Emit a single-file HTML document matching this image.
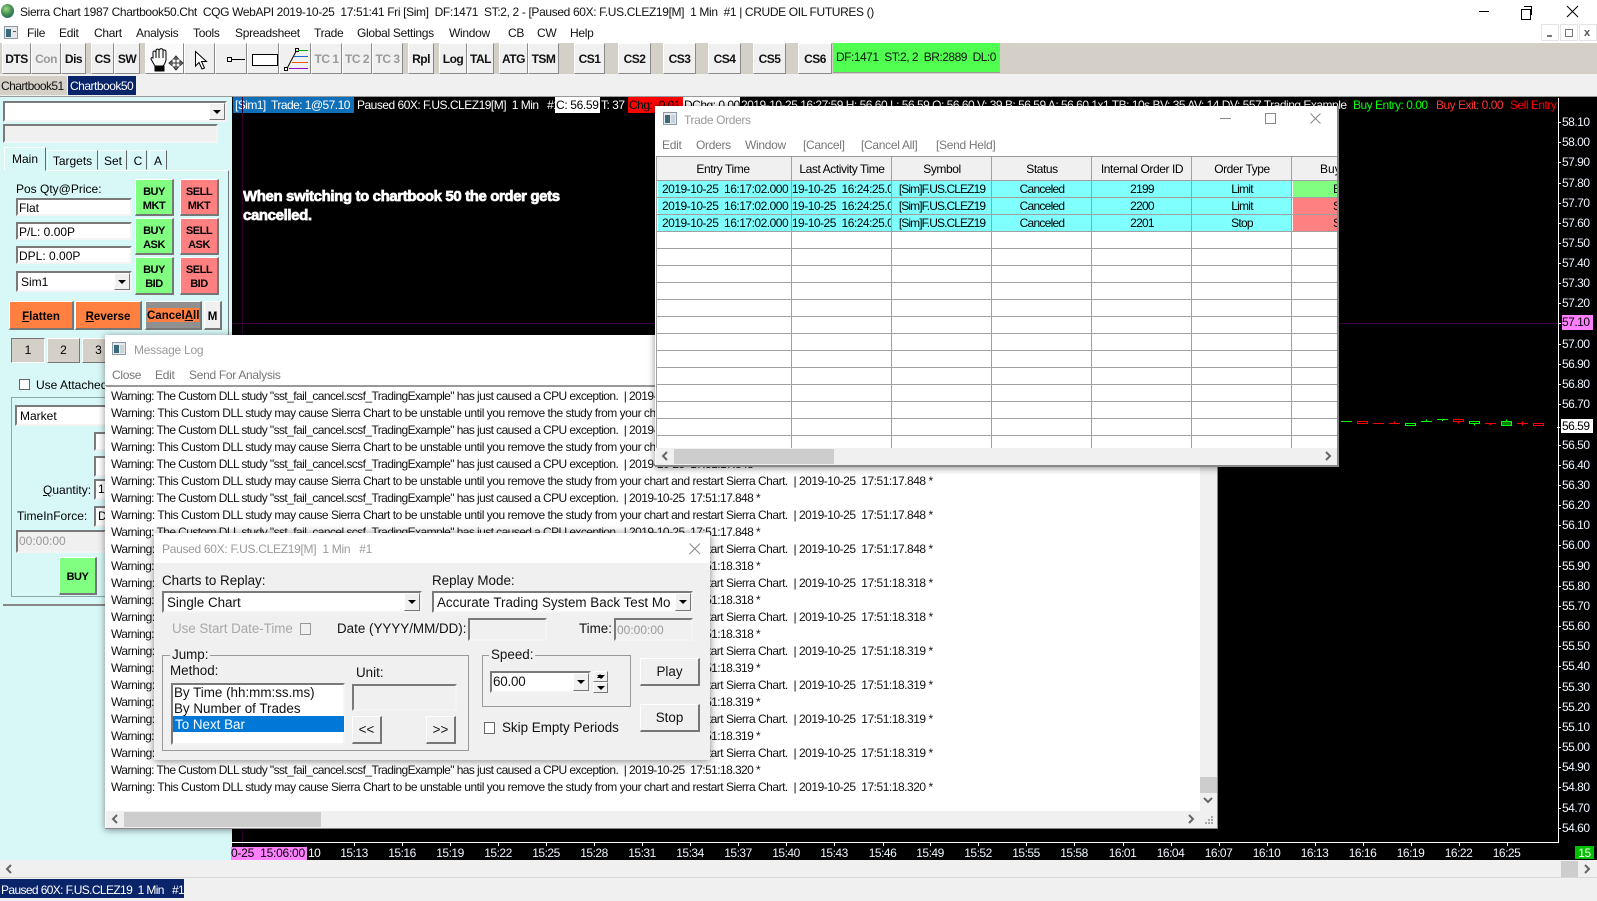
<!DOCTYPE html>
<html><head><meta charset="utf-8"><title>Sierra Chart</title>
<style>
html,body{margin:0;padding:0;width:1597px;height:898px;overflow:hidden;background:#f0f0f0;font:12px "Liberation Sans",sans-serif;color:#000}
div,span.t,svg{position:absolute}
.t{position:absolute;white-space:pre;line-height:16px}
.m{top:25px;letter-spacing:-.3px;color:#111}
.b{box-sizing:border-box;background:#f0f0f0;border:1px solid;border-color:#fff #8a8a8a #8a8a8a #fff;top:43px;height:31px;text-align:center;font-weight:bold;line-height:30px;letter-spacing:-.5px;color:#111}
.g{color:#9a9a9a}
.in{box-sizing:border-box;background:#fff;border:2px solid;border-color:#7a7a7a #f4f4f4 #f4f4f4 #7a7a7a;line-height:16px;white-space:pre;overflow:hidden}
.o{box-sizing:border-box;border:1px solid;border-color:#fff #777 #777 #fff;border-right-width:2px;border-bottom-width:2px;text-align:center;font-weight:bold;font-size:11.5px;line-height:14px;padding-top:8px}
.q{font-size:11px;letter-spacing:-.45px;padding-top:5px}
.bt{box-sizing:border-box;background:#f0f0f0;border:1px solid;border-color:#fff #777 #777 #fff;border-right-width:2px;border-bottom-width:2px;text-align:center;white-space:pre}
.ar{box-sizing:border-box;background:#f0f0f0;border:1px solid;border-color:#fff #777 #777 #fff}
.ar:after{content:"";position:absolute;left:50%;top:50%;margin:-2px 0 0 -4px;border:4px solid transparent;border-top:4px solid #000;border-bottom:0}
.p{position:absolute;left:1562px;height:16px;line-height:16px;color:#eef6ff;letter-spacing:-.5px;white-space:pre}
.p:before{content:"";position:absolute;left:-4px;top:8px;width:3px;height:1px;background:#fff}
.tm{position:absolute;top:845px;width:40px;margin-left:-20px;text-align:center;line-height:16px;color:#eef6ff;letter-spacing:-.5px}
.tm:before{content:"";position:absolute;left:20px;top:-3px;width:1px;height:4px;background:#fff}
.l{left:111px;letter-spacing:-.48px;color:#111}
.h{letter-spacing:-.58px}
.hd{top:4px;text-align:center;width:100px;letter-spacing:-.42px;overflow:hidden}
.c{text-align:center;width:98px;overflow:hidden;letter-spacing:-.75px}
.s{letter-spacing:-.9px;margin-left:1px}
.dt{letter-spacing:-.5px}
.dl{font-size:13.4px;color:#111}
</style></head><body>
<!-- title + menu -->
<div style="left:0;top:0;width:1597px;height:43px;background:#fff"></div>
<div style="left:1px;top:4px;width:13px;height:14px;border-radius:50%;background:radial-gradient(circle at 40% 35%,#9fd88a,#3d8a4a 50%,#1e4f8f)"></div>
<span class="t" style="left:20px;top:4px;letter-spacing:-.36px;color:#111">Sierra Chart 1987 Chartbook50.Cht  CQG WebAPI 2019-10-25  17:51:41 Fri [Sim]  DF:1471  ST:2, 2 - [Paused 60X: F.US.CLEZ19[M]  1 Min  #1 | CRUDE OIL FUTURES ()</span>
<div style="left:1479px;top:11px;width:10px;height:1px;background:#000"></div>
<div style="left:1521px;top:9px;width:8px;height:9px;border:1px solid #000;background:#fff"></div>
<div style="left:1524px;top:6px;width:7px;height:8px;border-top:1px solid #000;border-right:1px solid #000"></div>
<svg style="left:1566px;top:5px" width="13" height="13"><path d="M1 1L12 12M12 1L1 12" stroke="#000" fill="none"/></svg>
<svg style="left:4px;top:26px" width="15" height="14"><rect x=".5" y=".5" width="13" height="12" fill="#e8e8e8" stroke="#8a9aa8"/><rect x="2" y="3" width="5" height="8" fill="#3a6a7a"/><rect x="9" y="5" width="3" height="1" fill="#556"/></svg>
<span class="t m" style="left:27px">File</span><span class="t m" style="left:59px">Edit</span><span class="t m" style="left:94px">Chart</span><span class="t m" style="left:136px">Analysis</span><span class="t m" style="left:193px">Tools</span><span class="t m" style="left:235px">Spreadsheet</span><span class="t m" style="left:314px">Trade</span><span class="t m" style="left:357px">Global Settings</span><span class="t m" style="left:449px">Window</span><span class="t m" style="left:508px">CB</span><span class="t m" style="left:537px">CW</span><span class="t m" style="left:570px">Help</span>
<div style="left:1541px;top:24px;width:18px;height:17px;border:1px solid #e4e4e4;box-sizing:border-box"></div><div style="left:1547px;top:35px;width:5px;height:2px;background:#777"></div>
<div style="left:1560px;top:24px;width:18px;height:17px;border:1px solid #e4e4e4;box-sizing:border-box"></div><div style="left:1565px;top:29px;width:6px;height:6px;border:1px solid #777"></div>
<div style="left:1579px;top:24px;width:18px;height:17px;border:1px solid #e4e4e4;box-sizing:border-box"></div><span class="t" style="left:1584px;top:25px;font-weight:bold;font-size:11px;color:#555">x</span>
<!-- toolbar -->
<div style="left:0;top:43px;width:1597px;height:31px;background:#d4d0c8"></div>
<div class="b" style="left:2px;width:29px">DTS</div><div class="b g" style="left:31px;width:30px">Con</div><div class="b" style="left:61px;width:25px">Dis</div>
<div class="b" style="left:91px;width:23px">CS</div><div class="b" style="left:114px;width:26px">SW</div>
<div class="b" style="left:145px;width:39px;background:#fafafa"></div><div class="b" style="left:184px;width:31px"></div><div class="b" style="left:215px;width:32px"></div><div class="b" style="left:247px;width:32px"></div><div class="b" style="left:279px;width:32px"></div>
<div class="b g" style="left:311px;width:31px">TC 1</div><div class="b g" style="left:342px;width:30px">TC 2</div><div class="b g" style="left:372px;width:31px">TC 3</div>
<div class="b" style="left:408px;width:26px">Rpl</div><div class="b" style="left:439px;width:28px">Log</div><div class="b" style="left:467px;width:27px">TAL</div>
<div class="b" style="left:499px;width:29px">ATG</div><div class="b" style="left:528px;width:31px">TSM</div>
<div class="b" style="left:574px;width:31px">CS1</div><div class="b" style="left:618px;width:33px">CS2</div><div class="b" style="left:663px;width:33px">CS3</div><div class="b" style="left:708px;width:33px">CS4</div><div class="b" style="left:753px;width:33px">CS5</div><div class="b" style="left:798px;width:34px">CS6</div>
<div style="left:833px;top:43px;width:167px;height:30px;background:#50ff50;box-sizing:border-box;border-bottom:1px solid #999;line-height:29px;padding-left:3px;letter-spacing:-.5px;white-space:pre;color:#111">DF:1471  ST:2, 2  BR:2889  DL:0</div>
<svg style="left:150px;top:46px" width="36" height="26" fill="none" stroke="#000"><path d="M3 12L3 6Q4 4 6 6L6 4Q8 2 9 4L10 3Q12 2 13 4L14 4Q16 4 16 6L16 14Q15 18 13 20L5 20Q2 15 1 13Q1 11 3 12ZM6 6L6 12M9 4L9 12M13 4L13 12"/><rect x="5" y="20" width="9" height="5" fill="#000"/><path d="M26 10L26 24M19 17L33 17M26 10L23.5 13L28.5 13ZM26 24L23.5 21L28.5 21ZM19 17L22 14.5L22 19.5ZM33 17L30 14.5L30 19.5Z" fill="#fff" stroke="#333"/></svg>
<svg style="left:194px;top:50px" width="16" height="22"><path d="M1.5 1.5L1.5 16L5 12.5L8 19L10.5 18L7.5 11.5L12.5 11.5Z" fill="#fff" stroke="#000"/></svg>
<svg style="left:225px;top:53px" width="20" height="12"><rect x="2.5" y="4.5" width="4" height="4" fill="#fff" stroke="#000"/><path d="M6.5 6.5H20" stroke="#000"/></svg>
<div style="left:252px;top:54px;width:24px;height:10px;border:1px solid #000;background:#fff"></div>
<svg style="left:282px;top:47px" width="28" height="26" fill="none"><path d="M4.5 22.5L14.500 3.5" stroke="#000"/><rect x="2.500" y="20.500" width="3" height="3" fill="#fff" stroke="#000"/><rect x="13.500" y="1.500" width="3" height="3" fill="#fff" stroke="#000"/><path d="M16 3.500H26" stroke="#0a0"/><path d="M12 9.500H26" stroke="#26c"/><path d="M10 15.500H26" stroke="#e50"/><path d="M7 21.500H26" stroke="#90c"/></svg>
<!-- chartbook tabs -->
<div style="left:0;top:76px;width:67px;height:19px;background:#d4d0c8;line-height:21px;padding-left:1px;letter-spacing:-.55px;box-sizing:border-box;color:#111">Chartbook51</div>
<div style="left:68px;top:76px;width:68px;height:19px;background:#0a246a;line-height:21px;padding-left:2px;letter-spacing:-.5px;color:#fff;box-sizing:border-box">Chartbook50</div>
<div style="left:0;top:96px;width:1597px;height:1px;background:#999"></div>
<!-- left panel -->
<div style="left:0;top:97px;width:232px;height:763px;background:#d8f8f8"></div>
<div class="in" style="left:3px;top:101px;width:224px;height:21px"></div><div class="ar" style="left:209px;top:103px;width:16px;height:17px"></div>
<div class="in" style="left:3px;top:124px;width:215px;height:19px;background:#f0f0f0"></div>
<div style="left:7px;top:170px;width:221px;height:430px;background:#d8f8f8;border-top:1px solid #fff;border-right:1px solid #777"></div>
<div style="left:4px;top:147px;width:42px;height:24px;background:#d8f8f8;border:1px solid;border-color:#fff #666 transparent #fff;box-sizing:border-box;line-height:22px;padding-left:7px">Main</div>
<div style="left:47px;top:150px;width:51px;height:20px;background:#d8f8f8;border:1px solid;border-color:#fff #666 transparent #fff;box-sizing:border-box;line-height:20px;text-align:center">Targets</div>
<div style="left:99px;top:150px;width:28px;height:20px;background:#d8f8f8;border:1px solid;border-color:#fff #666 transparent #fff;box-sizing:border-box;line-height:20px;text-align:center">Set</div>
<div style="left:129px;top:150px;width:18px;height:20px;background:#d8f8f8;border:1px solid;border-color:#fff #666 transparent #fff;box-sizing:border-box;line-height:20px;text-align:center">C</div>
<div style="left:149px;top:150px;width:18px;height:20px;background:#d8f8f8;border:1px solid;border-color:#fff #666 transparent #fff;box-sizing:border-box;line-height:20px;text-align:center">A</div>
<span class="t" style="left:16px;top:181px">Pos Qty@Price:</span>
<div class="in" style="left:16px;top:198px;width:116px;height:18px;padding-left:1px;line-height:17px">Flat</div>
<div class="in" style="left:16px;top:222px;width:116px;height:18px;padding-left:1px;line-height:17px">P/L: 0.00P</div>
<div class="in" style="left:16px;top:246px;width:116px;height:18px;padding-left:1px;line-height:17px">DPL: 0.00P</div>
<div class="in" style="left:16px;top:271px;width:116px;height:21px;padding-left:3px;line-height:18px">Sim1</div><div class="ar" style="left:114px;top:273px;width:16px;height:17px"></div>
<div class="o q" style="left:135px;top:179px;width:39px;height:37px;background:#80ff80">BUY<br>MKT</div>
<div class="o q" style="left:135px;top:218px;width:39px;height:37px;background:#80ff80">BUY<br>ASK</div>
<div class="o q" style="left:135px;top:257px;width:39px;height:38px;background:#80ff80">BUY<br>BID</div>
<div class="o q" style="left:180px;top:179px;width:39px;height:37px;background:#ff8080">SELL<br>MKT</div>
<div class="o q" style="left:180px;top:218px;width:39px;height:37px;background:#ff8080">SELL<br>ASK</div>
<div class="o q" style="left:180px;top:257px;width:39px;height:38px;background:#ff8080">SELL<br>BID</div>
<div class="o" style="left:9px;top:301px;width:65px;height:29px;background:#ff8040"><u>F</u>latten</div>
<div class="o" style="left:75px;top:301px;width:67px;height:29px;background:#ff8040"><u>R</u>everse</div>
<div class="o" style="left:145px;top:301px;width:57px;height:29px;background:#909090;padding:0"></div>
<div style="left:147px;top:308px;width:52px;height:14px;background:#ff8040"></div>
<div style="left:147px;top:308px;width:52px;text-align:center;font-weight:bold;font-size:11.5px;line-height:17px;white-space:pre">Cancel<u>A</u>ll</div>
<div class="o" style="left:204px;top:301px;width:18px;height:29px;background:#f0f0f0">M</div>
<div style="left:11px;top:338px;width:34px;height:25px;background:#d4d0c8;box-sizing:border-box;border:1px solid;border-color:#777 #fff #fff #777;text-align:center;line-height:23px">1</div>
<div style="left:47px;top:338px;width:33px;height:25px;background:#d4d0c8;box-sizing:border-box;border:1px solid;border-color:#fff #777 #777 #fff;text-align:center;line-height:23px">2</div>
<div style="left:82px;top:338px;width:33px;height:25px;background:#d4d0c8;box-sizing:border-box;border:1px solid;border-color:#fff #777 #777 #fff;text-align:center;line-height:23px">3</div>
<div style="left:19px;top:379px;width:9px;height:9px;background:#fff;border:1px solid #666"></div>
<span class="t" style="left:36px;top:377px">Use Attached</span>
<div style="left:11px;top:397px;width:120px;height:200px;box-sizing:border-box;border:1px solid #8aa"></div>
<div class="in" style="left:15px;top:405px;width:100px;height:21px;padding-left:3px;line-height:19px">Market</div>
<div class="in" style="left:94px;top:432px;width:30px;height:19px"></div>
<div class="in" style="left:94px;top:456px;width:30px;height:21px"></div>
<span class="t" style="left:43px;top:482px"><u>Q</u>uantity:</span>
<div class="in" style="left:94px;top:479px;width:30px;height:21px;padding-left:2px">1</div>
<span class="t" style="left:17px;top:508px">TimeInForce:</span>
<div class="in" style="left:94px;top:506px;width:30px;height:21px;padding-left:2px">D</div>
<div class="in g" style="left:16px;top:530px;width:90px;height:23px;background:#f0f0f0;padding-left:1px;padding-top:1px">00:00:00</div>
<div class="o" style="left:59px;top:557px;width:38px;height:38px;background:#80ff80;padding-top:12px;font-size:11px;letter-spacing:-.45px">BUY</div>
<div style="left:3px;top:604px;width:104px;height:2px;background:#888"></div>
<!-- chart -->
<div style="left:232px;top:97px;width:1365px;height:763px;background:#000"></div>
<div style="left:233px;top:97px;width:121px;height:16px;background:#0f6fb8"></div>
<div style="left:555px;top:97px;width:45px;height:16px;background:#fff"></div>
<div style="left:628px;top:97px;width:55px;height:16px;background:#f00"></div>
<div style="left:683px;top:97px;width:57px;height:16px;background:#fff"></div>
<span class="t" style="left:235px;top:97px;color:#fff;letter-spacing:-.55px">[Sim1]  Trade: 1@57.10</span>
<span class="t" style="left:357px;top:97px;color:#fff;letter-spacing:-.5px">Paused 60X: F.US.CLEZ19[M]  1 Min   #1</span>
<span class="t" style="left:556px;top:97px;letter-spacing:-.35px">C: 56.59</span>
<span class="t" style="left:601px;top:97px;color:#fff;letter-spacing:-.5px">T: 37</span>
<span class="t" style="left:629px;top:97px;color:#000;letter-spacing:-.5px">Chg: -0.01</span>
<span class="t" style="left:684px;top:97px;letter-spacing:-.5px">DChg: 0.00</span>
<span class="t" style="left:741px;top:97px;color:#fff;letter-spacing:-.5px">2019-10-25 16:27:59 H: 56.60 L: 56.59 O: 56.60 V: 39 B: 56.59 A: 56.60 1x1 TB: 10s BV: 35 AV: 14 DV: 557 Trading Example</span>
<span class="t" style="left:1353px;top:97px;color:#0f0;letter-spacing:-.5px">Buy Entry: 0.00</span>
<span class="t" style="left:1436px;top:97px;color:#f33;letter-spacing:-.5px">Buy Exit: 0.00</span>
<span class="t" style="left:1510px;top:97px;color:#f00;letter-spacing:-.5px">Sell Entry</span>
<span class="t" style="left:243px;top:187px;color:#fff;font:bold 15px/19px 'Liberation Sans',sans-serif;letter-spacing:-.39px;-webkit-text-stroke:.7px #fff">When switching to chartbook 50 the order gets
cancelled.</span>
<div style="left:232px;top:323px;width:1326px;height:1px;background:#400040"></div>
<div style="left:242px;top:97px;width:1px;height:749px;background:#300030"></div>
<svg style="left:1340px;top:410px" width="210" height="30" fill="none" stroke-width="1">
<g stroke="#0f0"><path d="M1 11.500H12"/><rect x="65.500" y="13.500" width="10" height="2"/><path d="M81 11.500H92M86.500 9.500V11.500M97 9.500H108M102.500 9.500V11"/><rect x="129.500" y="11.500" width="10" height="2"/><path d="M134.500 13.500V15.500"/><rect x="161.500" y="11.500" width="10" height="4" fill="#0a800a"/><path d="M166.500 9.500V11.500"/></g>
<g stroke="#f00"><rect x="17.500" y="11.500" width="10" height="2"/><path d="M33 13.500H44M49 13.500H60M54.500 11.500V13.500"/><rect x="113.500" y="9.500" width="10" height="2"/><path d="M118.500 11.500V13.500M145 13.500H156M150.500 13.500V15M177 13.500H188M182.500 11.500V15.500"/><rect x="193.500" y="13.500" width="10" height="2"/></g></svg>
<div style="left:1558px;top:98px;width:1px;height:745px;background:#fff"></div>
<div style="left:231px;top:842px;width:1328px;height:1px;background:#fff"></div>
<span class="p" style="top:114px">58.10</span><span class="p" style="top:134px">58.00</span><span class="p" style="top:154px">57.90</span><span class="p" style="top:175px">57.80</span><span class="p" style="top:195px">57.70</span><span class="p" style="top:215px">57.60</span><span class="p" style="top:235px">57.50</span><span class="p" style="top:255px">57.40</span><span class="p" style="top:275px">57.30</span><span class="p" style="top:295px">57.20</span>
<span class="p" style="top:315px;background:#ff80ff;color:#000;padding:0 2px 0 0;width:29px;height:15px;line-height:15px">57.10</span>
<span class="p" style="top:336px">57.00</span><span class="p" style="top:356px">56.90</span><span class="p" style="top:376px">56.80</span><span class="p" style="top:396px">56.70</span>
<span class="p" style="top:419px;background:#fff;color:#000;width:31px;height:14px;line-height:14px;left:1561px;padding-left:1px">56.59</span>
<span class="p" style="top:437px">56.50</span><span class="p" style="top:457px">56.40</span><span class="p" style="top:477px">56.30</span><span class="p" style="top:497px">56.20</span><span class="p" style="top:517px">56.10</span><span class="p" style="top:537px">56.00</span><span class="p" style="top:558px">55.90</span><span class="p" style="top:578px">55.80</span><span class="p" style="top:598px">55.70</span><span class="p" style="top:618px">55.60</span><span class="p" style="top:638px">55.50</span><span class="p" style="top:658px">55.40</span><span class="p" style="top:679px">55.30</span><span class="p" style="top:699px">55.20</span><span class="p" style="top:719px">55.10</span><span class="p" style="top:739px">55.00</span><span class="p" style="top:759px">54.90</span><span class="p" style="top:779px">54.80</span><span class="p" style="top:800px">54.70</span><span class="p" style="top:820px">54.60</span>
<div style="left:231px;top:847px;width:76px;height:13px;background:#ff80ff;overflow:hidden"><span class="t" style="left:0;top:-2px;letter-spacing:-.25px">0-25  15:06:00</span></div>
<span class="t" style="left:308px;top:845px;color:#fff;letter-spacing:-.5px">10</span>
<span class="tm" style="left:354px">15:13</span><span class="tm" style="left:402px">15:16</span><span class="tm" style="left:450px">15:19</span><span class="tm" style="left:498px">15:22</span><span class="tm" style="left:546px">15:25</span><span class="tm" style="left:594px">15:28</span><span class="tm" style="left:642px">15:31</span><span class="tm" style="left:690px">15:34</span><span class="tm" style="left:738px">15:37</span><span class="tm" style="left:786px">15:40</span><span class="tm" style="left:834px">15:43</span><span class="tm" style="left:882.500px">15:46</span><span class="tm" style="left:930px">15:49</span><span class="tm" style="left:978px">15:52</span><span class="tm" style="left:1026px">15:55</span><span class="tm" style="left:1074px">15:58</span><span class="tm" style="left:1122.500px">16:01</span><span class="tm" style="left:1170.500px">16:04</span><span class="tm" style="left:1218.500px">16:07</span><span class="tm" style="left:1266.500px">16:10</span><span class="tm" style="left:1314.500px">16:13</span><span class="tm" style="left:1362.500px">16:16</span><span class="tm" style="left:1410.500px">16:19</span><span class="tm" style="left:1458.500px">16:22</span><span class="tm" style="left:1506.500px">16:25</span>
<div style="left:1575px;top:846px;width:19px;height:13px;background:#00c000;color:#fff;text-align:center;line-height:14px;letter-spacing:-.4px">15</div>
<!-- bottom -->
<div style="left:0;top:860px;width:1597px;height:17px;background:#f0f0f0"></div>
<div style="left:0;top:877px;width:1597px;height:1px;background:#d8d8d8"></div>
<svg style="left:4px;top:863px" width="10" height="12"><path d="M7 2L3 6L7 10" stroke="#666" stroke-width="2" fill="none"/></svg>
<div style="left:1561px;top:861px;width:17px;height:16px;background:#cdcdcd"></div>
<svg style="left:1582px;top:863px" width="10" height="12"><path d="M3 2L7 6L3 10" stroke="#666" stroke-width="2" fill="none"/></svg>
<div style="left:0;top:879px;width:184px;height:19px;background:#0a246a;color:#fff;line-height:22px;padding-left:1px;box-sizing:border-box;letter-spacing:-.62px;white-space:pre">Paused 60X: F.US.CLEZ19  1 Min   #1</div>
<!-- Message Log -->
<div style="left:105px;top:335px;width:1113px;height:494px;background:#fff;box-shadow:0 1px 7px rgba(0,0,0,.45);border-right:1px solid #888;border-bottom:1px solid #888;box-sizing:border-box"></div>
<svg style="left:112px;top:342px" width="15" height="14"><rect x=".5" y=".5" width="13" height="12" fill="#e8e8e8" stroke="#8a9aa8"/><rect x="2" y="3" width="5" height="8" fill="#3a6a7a"/><rect x="8" y="3" width="4" height="8" fill="#c8d4dc"/></svg>
<span class="t g" style="left:134px;top:342px;letter-spacing:-.25px">Message Log</span>
<span class="t" style="left:112px;top:367px;color:#777;letter-spacing:-.3px">Close</span><span class="t" style="left:155px;top:367px;color:#777;letter-spacing:-.3px">Edit</span><span class="t" style="left:189px;top:367px;color:#777;letter-spacing:-.3px">Send For Analysis</span>
<div style="left:105px;top:385px;width:1113px;height:1px;background:#999"></div>
<div style="left:106px;top:386px;width:1094px;height:1px;background:#999"></div>
<span class="t l h" style="top:388px">Warning: The Custom DLL study "sst_fail_cancel.scsf_TradingExample" has just caused a CPU exception.  | 2019-10-25  17:51:17.848 *</span>
<span class="t l" style="top:405px">Warning: This Custom DLL study may cause Sierra Chart to be unstable until you remove the study from your chart and restart Sierra Chart.  | 2019-10-25  17:51:17.848 *</span>
<span class="t l h" style="top:422px">Warning: The Custom DLL study "sst_fail_cancel.scsf_TradingExample" has just caused a CPU exception.  | 2019-10-25  17:51:17.848 *</span>
<span class="t l" style="top:439px">Warning: This Custom DLL study may cause Sierra Chart to be unstable until you remove the study from your chart and restart Sierra Chart.  | 2019-10-25  17:51:17.848 *</span>
<span class="t l h" style="top:456px">Warning: The Custom DLL study "sst_fail_cancel.scsf_TradingExample" has just caused a CPU exception.  | 2019-10-25  17:51:17.848 *</span>
<span class="t l" style="top:473px">Warning: This Custom DLL study may cause Sierra Chart to be unstable until you remove the study from your chart and restart Sierra Chart.  | 2019-10-25  17:51:17.848 *</span>
<span class="t l h" style="top:490px">Warning: The Custom DLL study "sst_fail_cancel.scsf_TradingExample" has just caused a CPU exception.  | 2019-10-25  17:51:17.848 *</span>
<span class="t l" style="top:507px">Warning: This Custom DLL study may cause Sierra Chart to be unstable until you remove the study from your chart and restart Sierra Chart.  | 2019-10-25  17:51:17.848 *</span>
<span class="t l h" style="top:524px">Warning: The Custom DLL study "sst_fail_cancel.scsf_TradingExample" has just caused a CPU exception.  | 2019-10-25  17:51:17.848 *</span>
<span class="t l" style="top:541px">Warning: This Custom DLL study may cause Sierra Chart to be unstable until you remove the study from your chart and restart Sierra Chart.  | 2019-10-25  17:51:17.848 *</span>
<span class="t l h" style="top:558px">Warning: The Custom DLL study "sst_fail_cancel.scsf_TradingExample" has just caused a CPU exception.  | 2019-10-25  17:51:18.318 *</span>
<span class="t l" style="top:575px">Warning: This Custom DLL study may cause Sierra Chart to be unstable until you remove the study from your chart and restart Sierra Chart.  | 2019-10-25  17:51:18.318 *</span>
<span class="t l h" style="top:592px">Warning: The Custom DLL study "sst_fail_cancel.scsf_TradingExample" has just caused a CPU exception.  | 2019-10-25  17:51:18.318 *</span>
<span class="t l" style="top:609px">Warning: This Custom DLL study may cause Sierra Chart to be unstable until you remove the study from your chart and restart Sierra Chart.  | 2019-10-25  17:51:18.318 *</span>
<span class="t l h" style="top:626px">Warning: The Custom DLL study "sst_fail_cancel.scsf_TradingExample" has just caused a CPU exception.  | 2019-10-25  17:51:18.318 *</span>
<span class="t l" style="top:643px">Warning: This Custom DLL study may cause Sierra Chart to be unstable until you remove the study from your chart and restart Sierra Chart.  | 2019-10-25  17:51:18.319 *</span>
<span class="t l h" style="top:660px">Warning: The Custom DLL study "sst_fail_cancel.scsf_TradingExample" has just caused a CPU exception.  | 2019-10-25  17:51:18.319 *</span>
<span class="t l" style="top:677px">Warning: This Custom DLL study may cause Sierra Chart to be unstable until you remove the study from your chart and restart Sierra Chart.  | 2019-10-25  17:51:18.319 *</span>
<span class="t l h" style="top:694px">Warning: The Custom DLL study "sst_fail_cancel.scsf_TradingExample" has just caused a CPU exception.  | 2019-10-25  17:51:18.319 *</span>
<span class="t l" style="top:711px">Warning: This Custom DLL study may cause Sierra Chart to be unstable until you remove the study from your chart and restart Sierra Chart.  | 2019-10-25  17:51:18.319 *</span>
<span class="t l h" style="top:728px">Warning: The Custom DLL study "sst_fail_cancel.scsf_TradingExample" has just caused a CPU exception.  | 2019-10-25  17:51:18.319 *</span>
<span class="t l" style="top:745px">Warning: This Custom DLL study may cause Sierra Chart to be unstable until you remove the study from your chart and restart Sierra Chart.  | 2019-10-25  17:51:18.319 *</span>
<span class="t l h" style="top:762px">Warning: The Custom DLL study "sst_fail_cancel.scsf_TradingExample" has just caused a CPU exception.  | 2019-10-25  17:51:18.320 *</span>
<span class="t l" style="top:779px">Warning: This Custom DLL study may cause Sierra Chart to be unstable until you remove the study from your chart and restart Sierra Chart.  | 2019-10-25  17:51:18.320 *</span>
<div style="left:1200px;top:386px;width:17px;height:425px;background:#f0f0f0"></div>
<div style="left:1200px;top:777px;width:17px;height:16px;background:#cdcdcd"></div>
<svg style="left:1202px;top:796px" width="12" height="10"><path d="M2 2L6 6L10 2" stroke="#666" stroke-width="2" fill="none"/></svg>
<div style="left:106px;top:811px;width:1111px;height:17px;background:#f0f0f0"></div>
<div style="left:124px;top:812px;width:197px;height:15px;background:#cdcdcd"></div>
<svg style="left:110px;top:813px" width="10" height="12"><path d="M7 2L3 6L7 10" stroke="#666" stroke-width="2" fill="none"/></svg>
<svg style="left:1186px;top:813px" width="10" height="12"><path d="M3 2L7 6L3 10" stroke="#666" stroke-width="2" fill="none"/></svg>
<svg style="left:1205px;top:816px" width="10" height="10" fill="#aaa"><rect x="6" y="0" width="2" height="2"/><rect x="3" y="3" width="2" height="2"/><rect x="6" y="3" width="2" height="2"/><rect x="0" y="6" width="2" height="2"/><rect x="3" y="6" width="2" height="2"/><rect x="6" y="6" width="2" height="2"/></svg>
<!-- Trade Orders -->
<div style="left:655px;top:106px;width:684px;height:361px;background:#fff;box-shadow:0 1px 7px rgba(0,0,0,.45);border-right:2px solid #888;border-bottom:2px solid #888;box-sizing:border-box"></div>
<svg style="left:663px;top:112px" width="15" height="14"><rect x=".5" y=".5" width="13" height="12" fill="#e8e8e8" stroke="#8a9aa8"/><rect x="2" y="3" width="5" height="8" fill="#3a6a7a"/><rect x="8" y="3" width="4" height="8" fill="#c8d4dc"/></svg>
<span class="t g" style="left:684px;top:112px;letter-spacing:-.35px">Trade Orders</span>
<div style="left:1220px;top:118px;width:11px;height:1px;background:#888"></div>
<div style="left:1265px;top:113px;width:9px;height:9px;border:1px solid #888"></div>
<svg style="left:1310px;top:113px" width="11" height="11"><path d="M.500 .500L10.500 10.500M10.500 .500L.500 10.500" stroke="#888" fill="none"/></svg>
<span class="t" style="left:662px;top:137px;color:#777;letter-spacing:-.3px">Edit</span><span class="t" style="left:696px;top:137px;color:#777;letter-spacing:-.3px">Orders</span><span class="t" style="left:745px;top:137px;color:#777;letter-spacing:-.3px">Window</span><span class="t" style="left:803px;top:137px;color:#777;letter-spacing:-.3px">[Cancel]</span><span class="t" style="left:861px;top:137px;color:#777;letter-spacing:-.3px">[Cancel All]</span><span class="t" style="left:936px;top:137px;color:#777;letter-spacing:-.3px">[Send Held]</span>
<div style="left:656px;top:156px;width:681px;height:292px;background:#fff;overflow:hidden;border-top:1px solid #999">
 <div style="left:0;top:0;width:681px;height:23px;background:#f0f0f0"></div>
 <div style="left:2px;top:23px;width:633px;height:51px;background:#80ffff"></div>
 <div style="left:637px;top:23px;width:44px;height:17px;background:#80ff80"></div>
 <div style="left:637px;top:40px;width:44px;height:34px;background:#ff8080"></div>
 <div style="left:0;top:23px;width:681px;height:269px;background:repeating-linear-gradient(180deg,#a0a0a0 0,#a0a0a0 1px,transparent 1px,transparent 17px)"></div>
 <div style="left:135px;top:0;width:1px;height:292px;background:#a0a0a0"></div><div style="left:235px;top:0;width:1px;height:292px;background:#a0a0a0"></div><div style="left:335px;top:0;width:1px;height:292px;background:#a0a0a0"></div><div style="left:435px;top:0;width:1px;height:292px;background:#a0a0a0"></div><div style="left:535px;top:0;width:1px;height:292px;background:#a0a0a0"></div><div style="left:635px;top:0;width:1px;height:292px;background:#a0a0a0"></div><div style="left:0;top:0;width:1px;height:292px;background:#a0a0a0"></div>
 <span class="t hd" style="left:17px">Entry Time</span><span class="t hd" style="left:136px">Last Activity Time</span><span class="t hd" style="left:236px">Symbol</span><span class="t hd" style="left:336px">Status</span><span class="t hd" style="left:436px">Internal Order ID</span><span class="t hd" style="left:536px">Order Type</span><span class="t" style="left:664px;top:4px">Buy/Sell</span>
 <span class="t dt" style="left:6px;top:24px">2019-10-25  16:17:02.000</span><span class="t dt" style="left:6px;top:41px">2019-10-25  16:17:02.000</span><span class="t dt" style="left:6px;top:58px">2019-10-25  16:17:02.000</span>
 <div style="left:136px;top:24px;width:99px;height:50px;overflow:hidden"><span class="t dt" style="left:-12.500px;top:0">2019-10-25  16:24:25.000</span><span class="t dt" style="left:-12.500px;top:17px">2019-10-25  16:24:25.000</span><span class="t dt" style="left:-12.500px;top:34px">2019-10-25  16:24:25.000</span></div>
 <span class="t c s" style="left:236px;top:24px">[Sim]F.US.CLEZ19</span><span class="t c s" style="left:236px;top:41px">[Sim]F.US.CLEZ19</span><span class="t c s" style="left:236px;top:58px">[Sim]F.US.CLEZ19</span>
 <span class="t c" style="left:337px;top:24px">Canceled</span><span class="t c" style="left:337px;top:41px">Canceled</span><span class="t c" style="left:337px;top:58px">Canceled</span>
 <span class="t c" style="left:437px;top:24px">2199</span><span class="t c" style="left:437px;top:41px">2200</span><span class="t c" style="left:437px;top:58px">2201</span>
 <span class="t c" style="left:537px;top:24px">Limit</span><span class="t c" style="left:537px;top:41px">Limit</span><span class="t c" style="left:537px;top:58px">Stop</span>
 <span class="t" style="left:677px;top:24px">Buy</span><span class="t" style="left:677px;top:41px">Sell</span><span class="t" style="left:677px;top:58px">Sell</span>
</div>
<div style="left:656px;top:448px;width:681px;height:17px;background:#f0f0f0"></div>
<div style="left:674px;top:449px;width:160px;height:15px;background:#cdcdcd"></div>
<svg style="left:660px;top:450px" width="10" height="12"><path d="M7 2L3 6L7 10" stroke="#666" stroke-width="2" fill="none"/></svg>
<svg style="left:1323px;top:450px" width="10" height="12"><path d="M3 2L7 6L3 10" stroke="#666" stroke-width="2" fill="none"/></svg>
<!-- Replay dialog -->
<div style="left:154px;top:533px;width:556px;height:227px;background:#f0f0f0;box-shadow:0 1px 8px rgba(0,0,0,.5)"></div>
<div style="left:154px;top:533px;width:556px;height:30px;background:#fff"></div>
<span class="t g" style="left:162px;top:541px;letter-spacing:-.3px">Paused 60X: F.US.CLEZ19[M]  1 Min   #1</span>
<svg style="left:689px;top:543px" width="12" height="12"><path d="M.500 .500L11 11M11 .500L.500 11" stroke="#888" fill="none"/></svg>
<span class="t dl" style="left:162px;top:573px">Charts to Replay:</span>
<span class="t dl" style="left:432px;top:573px">Replay Mode:</span>
<div class="in dl" style="left:162px;top:591px;width:260px;height:22px;padding:1px 0 0 3px;line-height:17px">Single Chart</div><div class="ar" style="left:404px;top:593px;width:16px;height:18px"></div>
<div class="in dl" style="left:432px;top:591px;width:261px;height:22px;padding:1px 0 0 3px;line-height:17px">Accurate Trading System Back Test Mo</div><div class="ar" style="left:675px;top:593px;width:16px;height:18px"></div>
<span class="t dl" style="left:172px;top:621px;color:#a8a8a8;letter-spacing:-.04px">Use Start Date-Time</span>
<div style="left:300px;top:623px;width:9px;height:10px;border:1px solid #999"></div>
<span class="t dl" style="left:337px;top:621px">Date (YYYY/MM/DD):</span>
<div class="in" style="left:468px;top:618px;width:79px;height:23px;background:#f0f0f0"></div>
<span class="t dl" style="left:579px;top:621px">Time:</span>
<div class="in g" style="left:614px;top:618px;width:79px;height:23px;background:#f0f0f0;padding:2px 0 0 1px">00:00:00</div>
<div style="left:162px;top:655px;width:307px;height:96px;box-sizing:border-box;border:1px solid #999"></div>
<span class="t dl" style="left:170px;top:647px;background:#f0f0f0;padding:0 2px">Jump:</span>
<span class="t dl" style="left:170px;top:663px">Method:</span>
<span class="t dl" style="left:356px;top:665px">Unit:</span>
<div class="in" style="left:171px;top:683px;width:174px;height:62px"></div>
<div style="left:173px;top:716px;width:171px;height:16px;background:#0078d7"></div>
<span class="t dl" style="left:174px;top:685px">By Time (hh:mm:ss.ms)</span>
<span class="t dl" style="left:174px;top:701px">By Number of Trades</span>
<span class="t dl" style="left:175px;top:717px;color:#fff">To Next Bar</span>
<div class="in" style="left:352px;top:684px;width:105px;height:27px;background:#f0f0f0"></div>
<div class="bt dl" style="left:352px;top:716px;width:30px;height:28px;line-height:25px">&lt;&lt;</div>
<div class="bt dl" style="left:426px;top:716px;width:30px;height:28px;line-height:25px">&gt;&gt;</div>
<div style="left:482px;top:655px;width:149px;height:52px;box-sizing:border-box;border:1px solid #999"></div>
<span class="t dl" style="left:489px;top:647px;background:#f0f0f0;padding:0 2px">Speed:</span>
<div class="in dl" style="left:490px;top:671px;width:101px;height:22px;padding:0 0 0 1px;line-height:17px;letter-spacing:-.2px">60.00</div><div class="ar" style="left:573px;top:673px;width:16px;height:18px"></div>
<div class="ar" style="left:593px;top:671px;width:15px;height:11px"></div>
<div style="left:597px;top:674px;width:0;height:0;border:3px solid transparent;border-bottom:4px solid #000;border-top:0"></div>
<div class="ar" style="left:593px;top:682px;width:15px;height:11px"></div>
<div class="bt dl" style="left:640px;top:658px;width:60px;height:28px;line-height:25px">Play</div>
<div class="bt dl" style="left:640px;top:704px;width:60px;height:28px;line-height:25px">Stop</div>
<div style="left:484px;top:722px;width:9px;height:10px;background:#fff;border:1px solid #666"></div>
<span class="t dl" style="left:502px;top:720px">Skip Empty Periods</span>
</body></html>
